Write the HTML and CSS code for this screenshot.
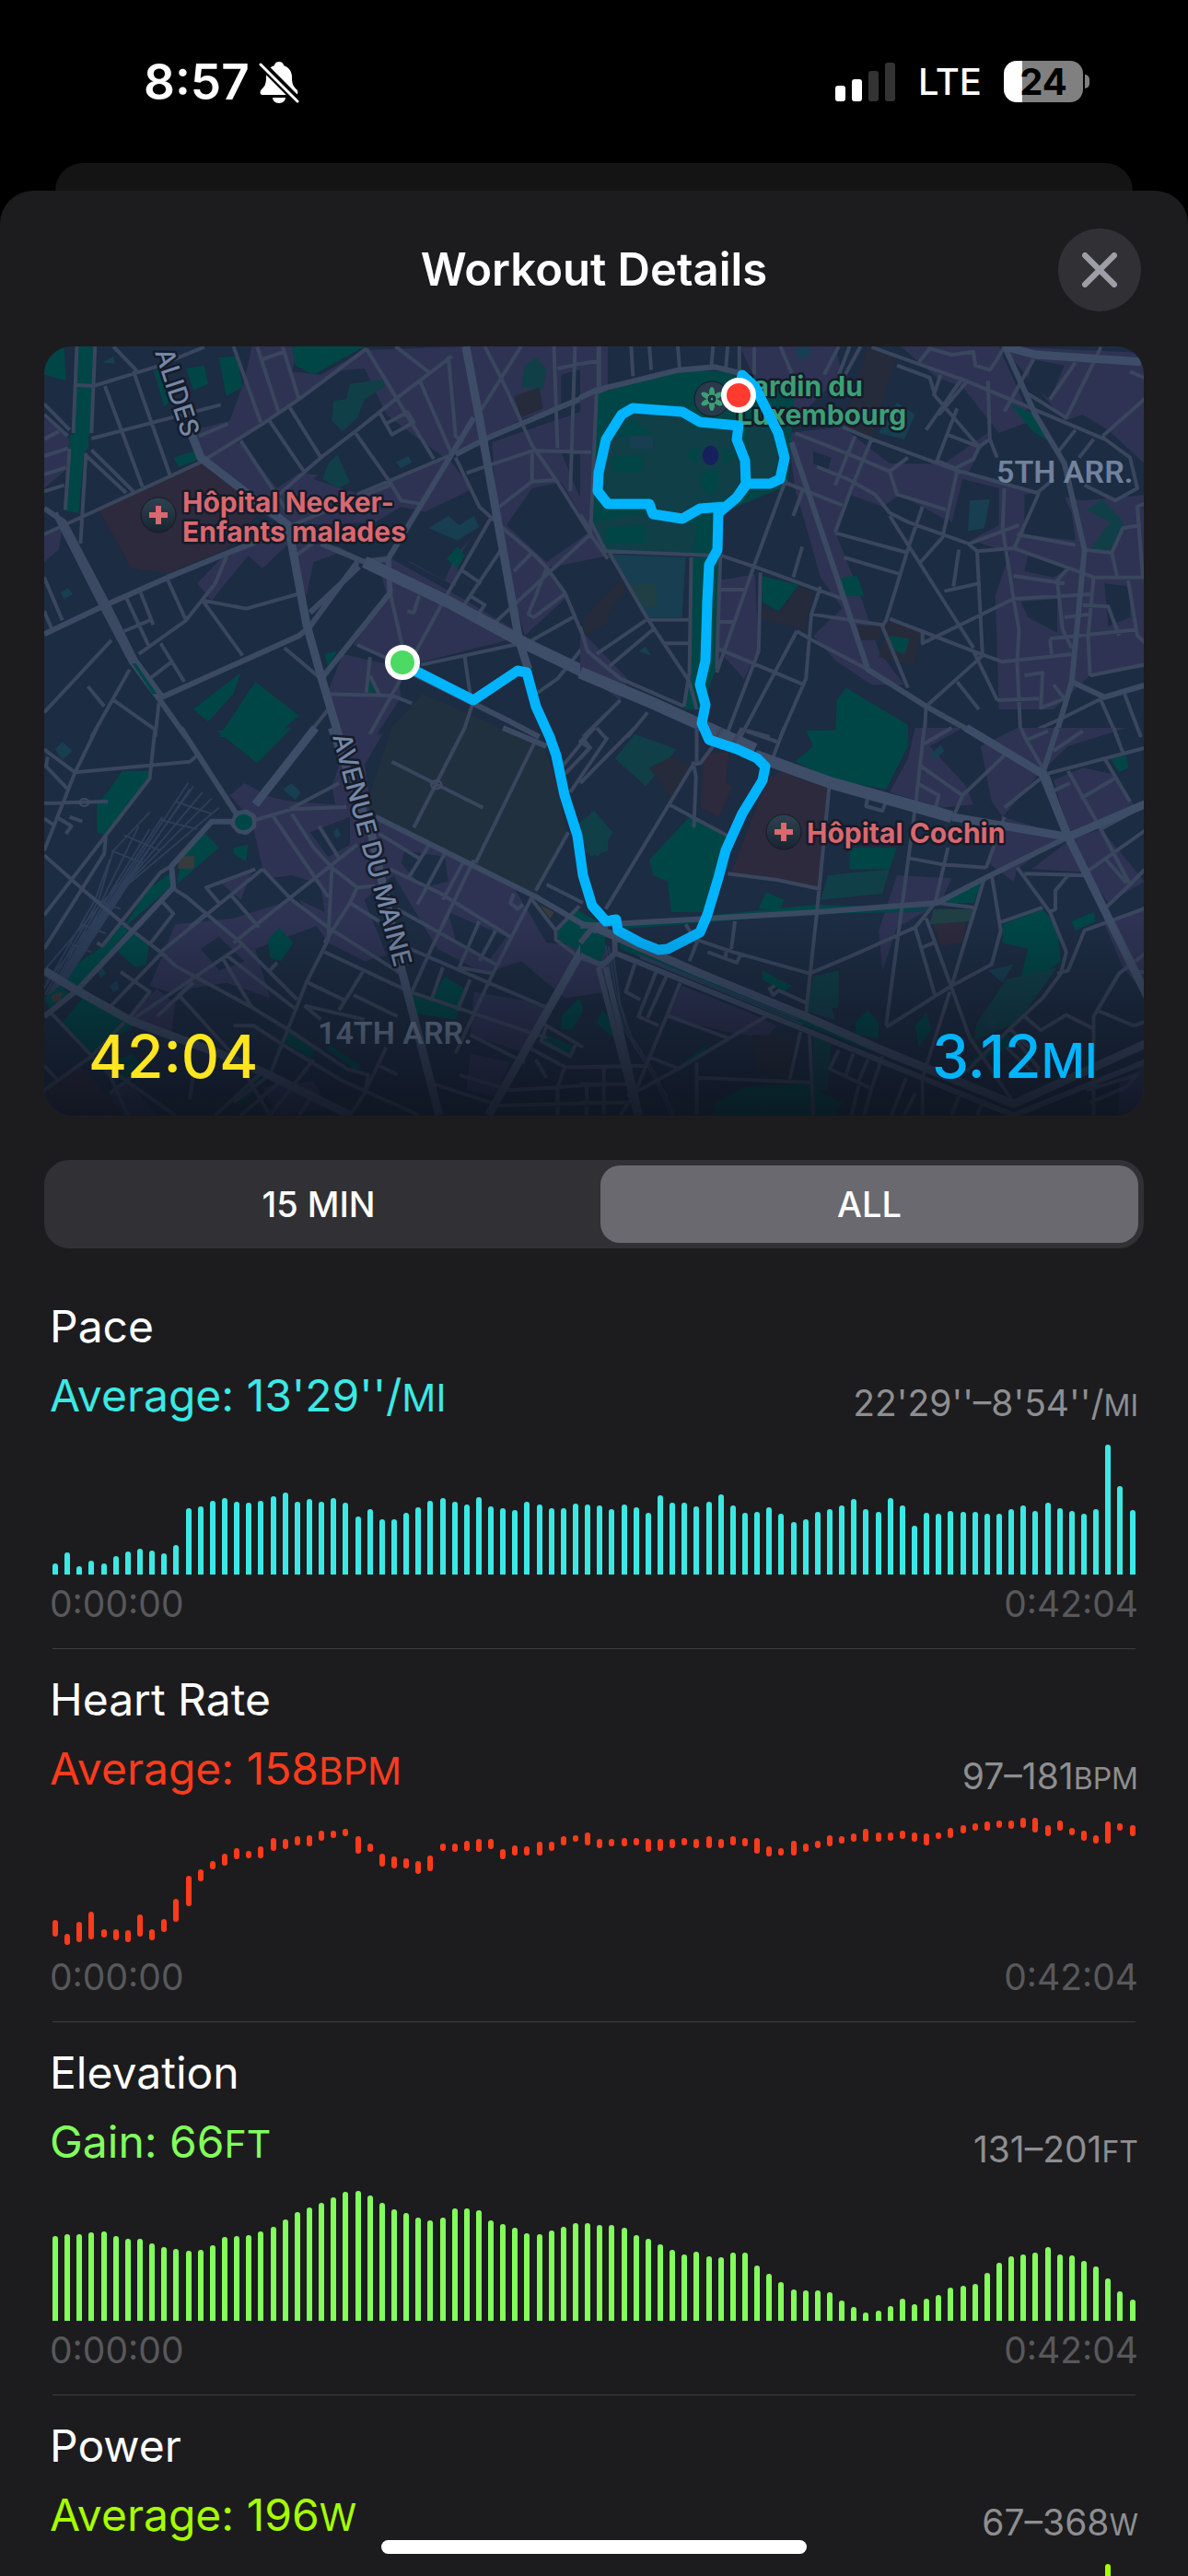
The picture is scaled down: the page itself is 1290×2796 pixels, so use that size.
FILE: index.html
```html
<!DOCTYPE html>
<html lang="en">
<head>
    <meta charset="UTF-8">
    <meta name="viewport" content="width=device-width, initial-scale=1.0">
    <title>Workout Details</title>
    <link rel="stylesheet" href="styles.css">
</head>
<body>
    <!-- Status bar -->
    <header class="status-bar">
        <div class="status-left">
            <span class="clock">8:57</span>
            <svg class="bell" viewBox="0 0 44 46" aria-hidden="true">
                <path fill="#fff" d="M22 1c3 0 5 2 5 4 6 2 9 7 9 13 0 8 2 10 5 13 2 2 2 6-1 6H4c-3 0-3-4-1-6 3-3 5-5 5-13 0-6 3-11 9-13 0-2 2-4 5-4zM15 40h14c0 3-3 6-7 6s-7-3-7-6z"/>
                <path stroke="#000" stroke-width="9" d="M0 1l43 43"/>
                <path stroke="#fff" stroke-width="3" stroke-linecap="round" d="M2 4l40 40"/>
            </svg>
        </div>
        <div class="status-right">
            <svg class="signal" viewBox="0 0 66 42" aria-hidden="true">
                <rect x="0" y="25" width="11" height="17" rx="3" fill="#fff"/>
                <rect x="18" y="18" width="11" height="24" rx="3" fill="#fff"/>
                <rect x="36" y="9" width="11" height="33" rx="3" fill="#333"/>
                <rect x="54" y="0" width="11" height="42" rx="3" fill="#333"/>
            </svg>
            <span class="network">LTE</span>
            <span class="battery"><span class="battery-level">24</span></span>
        </div>
    </header>

    <div class="back-card"></div>

    <main class="sheet">
        <div class="sheet-header">
            <h1 class="sheet-title">Workout Details</h1>
            <button class="close-button" type="button" aria-label="Close">
                <svg viewBox="0 0 36 36" aria-hidden="true"><path d="M3 3l30 30M33 3L3 33"/></svg>
            </button>
        </div>

        <!-- Route map -->
        <section class="map-card">
            <svg class="map" viewBox="48 376 1194 835" role="img" aria-label="Route map">
                <defs>
                    <linearGradient id="shade" x1="0" y1="0" x2="0" y2="1">
                        <stop offset="0" stop-color="#0c111c" stop-opacity="0"/>
                        <stop offset="1" stop-color="#0c111c" stop-opacity=".8"/>
                    </linearGradient>
                    <linearGradient id="pin" x1="0" y1="0" x2="0" y2="1">
                        <stop offset="0" stop-color="#2f4250"/>
                        <stop offset="1" stop-color="#182430"/>
                    </linearGradient>
                </defs>
                <rect class="land" x="48" y="376" width="1194" height="835"/>

                <!-- north west -->
                <g transform="translate(40 370) scale(.3954 .3333)">
                    <path class="block" d="M590 18H720L700 100L780 110L900 30L1180 18H1568V180L1340 250L1230 320L1120 380L1060 330L960 240L900 90L840 95L720 190L590 300L540 340L440 370L430 290L530 260L545 210L570 130ZM440 370L560 330L660 480L720 430L800 440L880 500L970 460L1130 380L1240 560L1160 700L1150 800L1020 720L1080 560L1000 540L930 590L700 600L640 580ZM520 690L680 640L740 830L760 720L830 690L880 710L960 700L1200 860L1340 960L1010 1060L870 990L960 820L940 740L830 670L760 660L700 650L620 740L580 700L480 845L440 790ZM1250 330L1568 200V380L1440 360L1480 480L1568 700L1400 740L1460 830L1340 960L1270 680ZM840 1020L990 1060L1000 1160L930 1290H830L800 1140ZM20 250L90 320L80 420L20 480ZM20 630L70 610L60 680L20 720Z"/>
                    <path class="land" d="M700 230L780 175L860 160L960 240L880 290L780 370ZM880 310L950 270L1060 330L1090 385L970 440ZM760 450L860 350L940 460L860 490ZM1060 560L1200 480L1245 570L1150 700L1120 780L1020 715ZM1440 110L1530 80V180L1440 220ZM1360 480L1440 460L1520 620L1400 720L1290 600ZM1060 1090L1180 1080L1300 1070L1340 1130L1250 1180Z"/>
                    <path class="park" d="M110 18H160L145 300L130 360L115 560L78 555L90 350L100 300ZM20 18H75L80 130L20 110ZM700 18H900L760 110L710 80ZM410 90L460 80L470 140L430 160ZM500 55L550 50L565 150L520 180ZM375 380L430 360L450 385L390 410ZM430 1200L560 1080L540 1150L470 1240ZM500 1290L600 1110L720 1220L650 1290ZM1125 710L1155 670L1175 700L1155 740ZM320 95L340 90L370 190L350 215ZM915 1080L935 1145L905 1140ZM790 1020L825 1010L800 1060Z"/>
                    <path class="garden" d="M860 140L950 125L955 150L900 190L880 250L840 295L810 260L815 195L850 190ZM800 400L825 370L860 460L830 480L785 450ZM1340 80L1370 55L1400 90L1390 160L1330 150Z"/>
                    <path class="school" d="M1075 610L1130 570L1160 600L1200 570L1215 605L1155 650ZM985 395L1020 375L1030 395L1000 415ZM180 70L210 50L215 75ZM65 820L85 805L100 825L75 840Z"/>
                    <path class="hospital" d="M170 550L450 392L485 430L560 490L610 560L520 680L360 755L260 740Z"/>
                    <path class="dim" d="M1310 180L1380 150L1390 220L1330 250ZM1500 920L1568 820V920L1510 960Z"/>
                    <path class="road" d="M110 18L100 300M160 18L150 300M105 143L155 147L325 85L460 20M210 18L275 98M187 147L290 475M265 98L365 435M20 205L90 290M20 240L85 310M150 318L505 208M20 320L60 295M20 375L85 350M20 435L80 412M20 490L75 470M90 350L78 550M135 365L120 660M150 355L265 490M132 370L245 495M20 630L450 395L620 270L720 190L905 25M540 18L615 265M605 20L665 235M675 20L720 190M620 60L680 35M445 310L525 270M905 25L1010 230L1090 385M985 18L1075 100M1130 50L1150 310L1170 330M665 500L780 380L880 290L990 185L1140 50M695 218L780 380M640 262L735 428M560 325L690 560M875 300L970 460L1000 520L1050 530M940 230L975 305L1035 265L1018 232L955 272M1330 18L1220 225M1230 18L1275 120L1360 340L1430 460L1520 630L1568 710M1420 18L1430 350M1478 18L1465 490M1545 18V150M1430 90L1540 62M1050 125L1140 370M880 500L1130 375M700 600L970 470M1180 430L1360 358L1525 362M1360 360V458L1270 540M1360 458L1425 453M1150 380L1215 540L1290 620L1360 690L1400 738L1450 820L1510 990L1568 1050M1250 570L1120 840L1000 1100M1275 680L1170 865M1360 690L1310 750M1520 630L1260 915M1400 740L1350 890L1365 900L1455 820M1165 745L1220 790M1190 830L1230 860L1215 885M1480 895L1345 985M1330 985L1055 1055M970 820L1005 1000M1050 830L1035 885L1018 880M1175 1030L1190 1150M880 990L1010 1060M455 845L575 872L715 825M525 690L490 790L410 910L280 1020M455 845L565 1025M358 775L410 910M710 700L780 640M285 820L320 925M245 835L310 1000M240 945L310 910M20 770L70 910M20 880L40 935M340 985L405 1110M370 1045L310 1100M20 1210L205 975M255 1070L150 1290M140 1125L185 1190M205 1165L330 1270M335 1180L325 1290M680 1000L780 1100M785 1150L975 1155L1030 1180M915 1030L905 1145M915 1090L940 1150M1000 1100L910 1290M800 1200L740 1290M1505 990L1430 1100L1370 1150M1568 1210L1500 1290M1525 180L1520 630"/>
                    <path class="street" d="M780 660L900 720L965 710L1200 250M965 710L970 820L785 1095M20 955L180 865L360 770L525 690L700 610M1150 370L1240 315L1360 255L1568 150M50 560L180 865L260 1045L335 1165L410 1290M20 545L75 590L195 860L270 1040L345 1160M335 1165L720 960L750 930L880 720M750 885L885 735M1010 1070L1300 1240L1380 1290"/>
                    <path class="avenue" d="M1178 18L1215 250L1325 980L1350 1070M420 290L450 380L690 600L740 920L780 1090L830 1290"/>
                    <path class="boulevard" d="M900 720L1130 850L1340 985L1568 1115"/>
                    <path class="park" d="M90 310L105 302H130L142 315V350L130 362H105L90 350ZM262 1050L272 1050L330 1150L318 1150Z"/>
                </g>

                <!-- north east -->
                <g transform="translate(630 370) scale(.3954 .3333)">
                    <path class="block" d="M0 18H50L45 160L0 190ZM440 20L700 18L720 110L560 290L470 100ZM880 18H1150L1240 260L1150 300L1050 150L980 120ZM1160 18L1568 40V420L1450 290L1380 240L1330 260L1230 120ZM570 300L720 280L850 400L1000 400L1130 290L1060 440L1000 580L880 500L830 540L740 500L700 620L770 830L820 1010L890 1120L800 1120L700 1040L640 960L720 870L660 770L590 480ZM1030 430L1260 490L1380 520L1568 500V1060L1400 1090L1300 1200L1150 1200L1140 830L1180 690L1050 640L1000 560ZM380 780L480 760L490 1000L450 1100L380 1010ZM0 940L130 1100L110 1170L0 1080ZM0 190L45 170L30 590L0 560ZM900 0L1000 50V110L930 60Z"/>
                    <path class="land" d="M1220 500L1320 480L1350 560L1360 650L1220 630ZM1050 450L1150 480V600L1070 650L1010 640ZM1210 850L1310 840V950L1230 900ZM1240 60L1330 80L1290 190L1230 140ZM1440 790L1510 800V900L1450 930ZM1230 700L1340 740L1300 770L1220 750ZM640 360L690 380L680 420L640 400Z"/>
                    <path class="park" d="M45 175L270 90L440 105L590 150L570 470L390 560L385 700L70 685L35 610ZM310 705H385L370 1080L330 1200H285L300 1050ZM500 765L600 795L545 880L500 850ZM715 770L760 765L780 830H720ZM730 1130L900 1250V1290H700L705 1170ZM1180 205L1250 240L1290 330L1240 290Z"/>
                    <path class="garden" d="M70 320L130 230H260L320 290L420 290L450 400L430 500L330 530L280 570L200 560V530L75 520L50 440ZM460 260L540 300V450H460ZM35 590L170 560L320 600L310 690L75 680ZM1390 550L1435 515L1495 595L1455 680H1400L1455 590Z"/>
                    <path class="park" d="M290 370L325 340V405ZM395 345L430 370L395 405ZM335 430L380 420V480L357 508L332 480ZM90 310L130 250L200 300L130 310ZM90 380L170 370V430H90ZM70 610L180 600V660H70Z"/>
                    <path class="school" d="M80 695L290 705L280 900H185ZM1070 520L1125 515L1110 610L1065 620ZM820 300L870 200L920 240L890 320ZM135 310H200V350H135ZM590 25L630 20V50L600 60ZM160 1010L180 995L195 1025Z"/>
                    <path class="olive" d="M130 795L210 790V870L175 865Z"/>
                    <path class="dim" d="M500 870L550 885L600 800L640 820L615 940L500 905ZM820 1030L850 905L940 940L915 1055ZM790 20L870 40L800 320L720 280ZM10 900L110 780L125 810L50 930L10 960ZM760 925L830 930L820 975L770 975Z"/>
                    <path class="park" d="M850 960L905 970L890 1020L850 1000Z"/>
                    <ellipse class="pond" cx="358" cy="373" rx="22" ry="32"/>
                    <path class="road" d="M0 75L50 65M50 18V160M140 18L145 115M190 18L195 95M268 18L273 90M365 18L360 85M405 18L400 90M437 18V105M478 20V110M550 18L600 160M710 18L670 110M740 18L710 110M770 18L700 170M800 20L870 50L1060 130L1200 200L1440 320M870 80L960 120L975 180L1095 345M990 110L970 180M1050 120L950 290M1060 135L985 240M930 70L960 25L1020 45L1080 35L1085 80L1125 95L1145 60L1165 18M1245 60L1165 230M1220 165L1335 250L1410 70M1360 70L1290 190M1430 20L1410 70M1568 170L1435 310M1510 100L1568 130M0 362H30M45 165L30 590L70 685L390 700L490 740L720 840M0 565L30 620M80 690L185 905L300 1110L320 1200M305 705L300 1080L285 1190M385 700L375 1070M380 810H450M375 915H425M180 908H300M230 985H300M590 300L740 370L850 425L900 380M720 280L800 320L1030 420L1255 495L1300 450M850 425L870 500L1005 550M735 450L810 500L850 560L900 590L1065 660L1090 685L1190 675L1365 750L1410 770H1568M755 310L700 470M800 320L745 480L700 625M650 410L735 450M565 450L475 740L375 1080M610 490L585 570M560 460L720 535M1095 345L1125 320L1120 130M1125 320L1145 380M1095 345L1080 385L1030 415L980 390L1035 220M1008 305L1095 345M1035 425L995 640L935 720M940 540L905 660L840 910L830 930L900 1130M850 570L1080 1000M700 625L900 690M725 705L880 760M610 670L585 770M495 755L490 1010L400 1290M660 800L635 890L620 1100L550 1290M635 890L830 925M595 945L630 970L790 1070M595 945L440 1290M375 1000L615 1120M850 905L1100 1020L1160 1045L1350 1020M940 950V985L1190 840L1400 825M1000 815L1095 790M1040 680L1025 800M1090 685L1105 1025L950 1190M1165 480L1160 610L1190 840L1205 940L1200 1050L1210 1290M1070 660L1205 600M1260 495L1190 680M1200 630L1360 665M1340 740L1310 780L1325 940L1350 1000M1190 765L1330 790M1385 680L1460 690L1490 610L1540 600M1410 770L1395 960L1400 1090M1460 690L1475 770M1505 780L1530 960L1568 1000M1385 470L1470 520L1530 480L1510 380L1430 310M1310 365L1360 290M1370 380L1410 320M1568 520L1530 540L1545 770M1290 970L1530 940M1290 970L1295 1020M1330 900L1400 890M1380 860L1450 865L1480 960M1220 1090L1270 1080L1265 1195L1330 1165L1300 1120M1035 1110L1095 1200M1145 1170L1260 1165M1145 1170L1080 1010M1430 1170L1475 1290M1495 1150L1540 1290M1440 1160L1330 1225L1210 1290M950 1190L945 1290M10 1290L110 1170M185 1210L130 1290M45 1020L180 910M80 1060L200 940M0 930L20 1010L110 1100L285 1190M1400 1090L1568 1050M460 1270L520 1290"/>
                    <path class="street" d="M0 185L45 160L270 95L370 85L440 105L480 135M1165 18L1250 240L1330 400L1385 680L1350 1110L1305 1290M1350 1110L1440 1160L1568 1115M580 330L620 470L790 1070L950 1190L1100 1290"/>
                    <path class="avenue" d="M1165 18L1250 45L1540 68"/>
                    <path class="boulevard" d="M0 1080L200 1180L480 1330"/>
                </g>

                <!-- south west -->
                <g transform="translate(40 790) scale(.3954 .3333)">
                    <path class="block" d="M530 220L570 180L640 225L700 240L820 250L810 190L860 20H950L900 120L920 280L940 300L1300 500L1400 700L1568 720V860L1450 880L1330 760L1230 800L1100 720L980 480L900 560L960 740L900 760L800 700L720 560L620 460L590 300ZM380 640L540 620L700 560L780 640L600 720L640 880L520 830L360 860L310 840ZM250 940L330 850L380 900L370 990L280 960ZM1200 860L1400 900L1340 1060L1190 1000ZM1190 1060L1300 1090L1260 1200L1180 1180ZM620 1170L760 1150L800 1240L660 1262ZM200 1190L250 1150L330 1262H220ZM500 500L590 470L560 560Z"/>
                    <path class="land" d="M640 490L700 480L780 510L790 600L720 560ZM1010 400L1120 420L1130 500L1060 520L1000 440ZM1130 600L1290 680L1240 760L1150 690ZM450 720L500 680L570 760L500 790ZM750 340L860 290L860 380L800 420Z"/>
                    <path class="park" d="M235 140H310V160L190 350L165 340V250L200 200ZM385 510L400 400L460 340L500 390ZM240 650L300 530L370 470L375 510ZM60 810L170 720L230 640L250 660L110 850ZM215 720L250 660L310 700L300 770L270 780ZM70 960L140 860L280 960L150 1060ZM20 880L70 840L90 870L40 920ZM495 10L700 0L605 115ZM540 390L580 380L575 435L540 410ZM635 690L665 650L705 700L670 760L640 750ZM1085 880L1120 810L1175 850L1150 930ZM1030 870L1160 920L1150 950L1040 930ZM690 980L770 1040L750 1080L680 1020ZM800 1030L890 1100L880 1120L800 1050ZM1430 650L1480 590L1568 650L1550 765L1430 690ZM1400 1000L1480 1040L1465 1070L1395 1020ZM1440 940L1490 880L1500 920L1470 985L1440 980ZM540 1220L620 1120L600 1180L560 1230ZM220 1080L260 1060L300 1110L240 1160Z"/>
                    <path class="garden" d="M1470 330L1530 270L1568 320V400L1520 420Z"/>
                    <path class="school" d="M50 70L70 45L98 75L70 105ZM675 200L700 180L725 210L710 235ZM815 340L825 325L835 350L822 360ZM165 790L180 780L190 800L175 815ZM200 840L220 825L225 850L210 862Z"/>
                    <path class="hospital" d="M20 1180L120 1100L240 1262H20Z"/>
                    <path class="clay" d="M388 418H432V458H388ZM40 870L70 858L65 890L42 895ZM1380 575L1420 600L1410 622Z"/>
                    <path class="rail" d="M22 870L170 560L210 400L310 275M30 870L180 560L280 320M38 865L195 550L310 330M20 850L160 560L200 430M45 860L205 545L345 290M52 850L215 540L415 180M58 845L225 530L430 190M64 840L235 520L455 210M70 835L245 510L480 230M76 830L250 510L500 260M20 790L230 500M26 830L260 480L420 200M205 400L290 440M240 350L340 400M160 560L230 590M340 300L440 330M380 240L480 280M120 640L190 670M90 700L150 730"/>
                </g>
                <path class="cemetery" d="M459 753L566 800L590 810L605 850L615 903L582 973L405 886L398 873L425 790Z"/>
                <g transform="translate(40 790) scale(.3954 .3333)">
                    <path class="road" d="M975 110L1225 260M1175 0L1035 325M1370 40L1205 440M1200 -90L1175 0M165 0L105 145L20 400M20 70L105 145L420 110L440 90M30 95L25 125L85 200M325 0L310 165L20 610M190 350L185 410L20 720M20 245L195 240M20 295L50 320M60 295L95 320L80 345M90 290L125 305M20 415L130 530L250 650L340 730L380 775L590 910M370 520L410 550L560 700L715 885M340 560L375 605L310 705M230 795L310 860L250 950M345 730L200 910M420 650L465 605M430 830L330 940M500 570L465 520L600 460M620 460L340 730M530 540L610 650M620 460L700 560L800 650L1000 800M540 700L880 380M560 710L250 960M600 300L700 265L850 258M695 265L830 180M650 290L800 550M700 280L760 390L810 455L880 520L930 515M775 320L830 425M810 460L800 690L740 830L640 1130M880 520L860 570L790 700M640 790L660 765M520 740L715 920M510 750L590 910L700 990L850 1110L910 1130L900 1190M745 830L850 890M790 730L1025 860L1400 1010M895 795L830 920M870 870L990 940M735 905L900 950M735 905L780 950M860 570L940 630M940 345L1050 425M970 460L1110 540L1300 680M1075 385L1020 490M1120 410L1045 575M1170 440L1115 560M1200 430L1075 740L1030 860M1215 630L1160 780L1250 800M1260 660L1215 760M1360 550L1240 830L1150 1060M990 590L1260 770M1025 720L1240 830L1400 910M1190 820L1155 920M1115 780L1085 880M1310 540L1300 570L1320 590L1335 575M1400 510L1500 570M1460 340L1370 530M1360 560L1425 660L1490 580M1425 660V690L1480 740M1530 0L1440 130M1500 35L1520 65L1450 150M1568 30L1465 210M430 830L390 870L550 1080L640 1262M540 970H595L700 1050L840 1150L1050 1262M20 1180L150 1070L240 960M150 1070L380 1262M40 930L200 1130L250 1262M200 1190L270 1130M20 1100L60 1150M430 1130L420 1210M540 1220L640 1130M490 1262L620 1120M560 1262L680 1140M640 1262L760 1080M750 1210L720 1262M960 1040L900 1190L860 1262M940 1100L990 1130M1160 1130L1300 1180L1568 1160M1090 1160L1270 1230L1568 1220M1350 1040L1450 1105H1568M1450 1105L1430 1170V1262M1385 960L1500 1040M1400 970L1385 1020L1465 1070L1480 1030M1370 1080L1400 1140M1190 1000L1340 1090M1510 1160V1262M165 700L180 710L340 470L370 450"/>
                    <path class="street" d="M395 0L545 275M545 305H480L370 450L375 520L110 855L20 940M930 290L1370 550L1500 640L1568 650M1480 740L1550 770L1568 760M1280 0L1400 60M575 275L595 290V320L575 340L555 335L540 315L548 280Z"/>
                    <path class="avenue" d="M765 0L600 250M20 790L110 855L260 955L500 1060L620 1120L860 1262M1530 650L1480 760L1240 1262M810 0L920 350L1000 780L1105 1262"/>
                    <circle class="street" cx="1097" cy="185" r="14"/>
                    <circle class="street" cx="130" cy="243" r="12"/>
                    <ellipse class="park" cx="568" cy="307" rx="24" ry="26"/>
                </g>

                <!-- south east -->
                <g transform="translate(630 790) scale(.3954 .3333)">
                    <path class="block" d="M920 0H1050L960 60L1060 190L1080 250L990 260L850 210L900 100ZM1100 60L1200 0H1500L1340 60L1260 150L1160 290L1130 240ZM1300 170L1380 130L1460 150L1520 250L1340 340ZM1120 440L1160 290L1330 350L1200 460L1190 500ZM1350 360L1430 330L1550 500L1450 570L1390 470L1240 460ZM870 480L1020 490L990 570L870 650L830 790L820 660ZM1440 640L1568 570V940L1540 850L1490 780ZM240 940L280 840L450 920L540 970L510 1010L400 990ZM0 780L50 790L40 850L0 810ZM1480 1160L1568 1080V1220L1480 1262Z"/>
                    <path class="park" d="M620 10L900 0V60L840 200L700 170L590 110L640 60ZM190 430L300 290L410 360L340 600H250L240 500L200 480ZM740 390H870L850 460H740ZM490 590L510 535L560 560L550 590ZM120 640L650 575L960 590L930 600L650 605L120 655ZM110 690L640 940L820 1050L1190 1210L1180 1225L620 970L110 720ZM1160 640L1270 590L1310 650L1320 760L1200 860L1230 720L1160 700ZM500 790L580 840L560 860L500 820ZM755 960L790 920L820 960V1010L760 1000ZM920 970L950 930L965 980L930 1040ZM370 1220L450 1170L620 1160L720 1220L700 1262H365ZM1350 630L1410 600L1415 630L1360 660ZM1455 100L1500 90L1505 130L1480 145ZM0 650L35 665L75 710L50 765L0 740ZM270 1100L350 1030L330 1080ZM45 960L60 920L90 950V1010ZM1030 1120L1170 1000L1200 1030L1060 1100ZM980 570L1110 490L1080 570ZM1190 1225L1568 1040V1020L1200 1200Z"/>
                    <path class="garden" d="M680 480L850 460L830 540L660 560ZM640 810L710 790V910L620 930ZM95 100L150 20L265 70L180 190ZM30 270L90 340L50 420L10 400ZM1170 820L1310 780L1200 960L1080 1020L1090 960ZM640 1000L690 1020L680 1180H640Z"/>
                    <path class="school" d="M1120 790L1190 770L1160 830ZM1110 970L1130 940L1145 960L1130 985ZM960 90L990 55L1000 75L975 105ZM640 920L690 910L700 950L640 930Z"/>
                    <path class="hospital" d="M520 160L560 140L680 195L655 525L415 470L470 300ZM340 80H410L400 180L420 190L380 290L330 260ZM970 640L1060 620L1050 700L990 710Z"/>
                    <path class="dim" d="M190 130L250 95L310 130L250 230ZM475 1000L590 1010L570 1140L480 1110Z"/>
                    <path class="olive" d="M970 590H1080L1070 630L960 640Z"/>
                    <path class="rail" d="M70 710L90 860L120 980L200 1130L250 1262M78 712L98 860L128 980L208 1130L258 1262M90 735L110 900L150 1040L240 1200M160 740L600 950M165 748L610 965"/>
                    <path class="road" d="M150 0L0 180M40 0L0 45L25 65L0 100M45 0L75 40M365 60L330 115L310 120L70 590M310 110L318 160L312 325M320 0V110M245 250L410 355M405 475L540 495L660 525M685 180L650 600L620 930M455 10L540 45M390 0L370 40M560 0L530 95M445 0L420 50M790 220L785 255L830 270L840 240M925 180L985 220L975 265M945 0L920 260L840 970M930 120L1050 220L1165 90M940 55L1020 0M1050 220L1025 290M1010 390L975 570M905 425L995 445L1115 455M1130 480L1155 660L1130 770L1020 840L840 975M1110 490L1020 840M1200 455L1290 600L1335 730L1320 800L1270 880L1180 980L1060 1120M1150 635L1270 585M1290 600L1305 590V530L1340 480M1220 475L1390 480M1310 800L1340 790L1385 660L1568 580M980 570L1080 585M975 570L920 650L740 745L630 800L420 730L320 690M920 650L975 875M950 620L1015 830L1070 1010L1190 1220M940 715L970 700M1015 860L940 1140M1165 260L1280 150M1115 455L1165 290M1210 0L1225 40L1280 150M1225 40L1285 10M1300 75L1380 10M1280 150L1568 60M1340 140L1430 330L1510 510L1568 440M1430 330L1568 240M1465 0L1490 80M1440 100L1510 240M1375 230L1475 160M1300 205L1345 180M1510 510L1440 590M1445 430L1500 505M1568 320L1390 470M1568 720L1480 800L1410 940V1262M1515 795H1568M1420 920L1520 970L1568 950M1410 980L1335 935L1265 985L1220 940M1180 980L1250 1060M150 770L125 860L165 885M210 790L160 940L215 970M240 800L185 945M275 830L150 1190M235 935L405 1010M510 940L270 1110L130 1200M185 1070L270 1110M290 640L320 700L300 760M425 630L415 720M350 730L430 765L440 740M400 720V750M620 895L545 855L530 870L520 850L535 840M605 990L575 1145M630 1000L640 1262M320 1090V1262M325 1140L635 1155M0 1105L180 1100M0 1160H130M0 1220H130M65 1105V1262M110 1262L150 1190M710 1050L685 1110L800 1175L830 1070M750 1060L730 1130M790 1080L765 1150M765 1165L745 1262M800 1175L780 1262M940 1140V1262M895 1140L855 1262M920 1190L890 1262M1040 1200L1020 1262M1110 1210L1090 1262M1390 1180L1530 1130L1500 1170L1400 1220M1200 1020L1260 1110L1250 1130L1170 1040"/>
                    <path class="street" d="M1340 355L1110 490L980 570L650 600L0 645M1310 0L1270 150M100 735L620 985L1190 1262L1568 1080M0 740L60 775L95 735V690M50 780L155 1262M70 780L165 1262M1280 150L1340 355M0 700L35 650"/>
                    <path class="avenue" d="M1060 0L1270 150L1340 355L1568 900M1340 355L1568 240M40 650L330 800L620 940L830 1050L1190 1225L1568 1020"/>
                    <path class="boulevard" d="M480 90L690 180L1020 290"/>
                    <path class="avenue" d="M1020 290L1340 355"/>
                </g>

                <!-- labels and pins -->
                <g class="street-name">
                    <text transform="translate(168 382) rotate(72)">ALIDES</text>
                    <text transform="translate(361 799) rotate(75)">AVENUE DU MAINE</text>
                </g>
                <g class="district">
                    <text x="1082" y="524">5TH ARR.</text>
                    <text x="345" y="1133">14TH ARR.</text>
                </g>
                <g class="place">
                    <circle cx="172" cy="559" r="19" fill="url(#pin)"/>
                    <path d="M162 559h20M172 549v20"/>
                    <text x="198" y="556">Hôpital Necker-</text>
                    <text x="198" y="588">Enfants malades</text>
                    <circle cx="851" cy="903" r="19" fill="url(#pin)"/>
                    <path d="M841 903h20M851 893v20"/>
                    <text x="876" y="915">Hôpital Cochin</text>
                </g>
                <g class="place place-park">
                    <circle cx="773" cy="433" r="19" fill="#2a3a4c"/>
                    <g class="petals">
                        <ellipse cx="773" cy="426" rx="3" ry="6"/>
                        <ellipse cx="773" cy="426" rx="3" ry="6" transform="rotate(60 773 433)"/>
                        <ellipse cx="773" cy="426" rx="3" ry="6" transform="rotate(120 773 433)"/>
                        <ellipse cx="773" cy="426" rx="3" ry="6" transform="rotate(180 773 433)"/>
                        <ellipse cx="773" cy="426" rx="3" ry="6" transform="rotate(240 773 433)"/>
                        <ellipse cx="773" cy="426" rx="3" ry="6" transform="rotate(300 773 433)"/>
                    </g>
                    <circle cx="773" cy="433" r="4" fill="#2a3a4c"/>
                    <circle cx="773" cy="433" r="2" fill="#3c9e76"/>
                    <text x="800" y="430">Jardin du</text>
                    <text x="800" y="461">Luxembourg</text>
                </g>

                <path class="route" d="M437 719L451 728L514 760L562 728L572 730L582 767L597 800L604 820L613 863L627 907L633 950L643 983L658 1000L669 998L671 1010L695 1023L715 1031L725 1030L760 1012L768 993L780 953L788 923L806 883L828 847L831 832L822 823L800 813L770 803L762 785L766 765L760 743L766 717L768 653L770 613L779 597L780 557L800 540L810 527L809 500L800 477L802 462L760 458L741 447L687 443L675 450L658 477L650 513L649 533L660 547L705 547L709 558L741 563L760 552L788 550L800 540L810 525L836 525L847 520L852 497L845 470L820 420L806 407L802 429"/>
                <circle class="marker" cx="437" cy="719" r="16" fill="#4cd964"/>
                <circle class="marker" cx="802" cy="429" r="16" fill="#ff3b30"/>
                <rect x="48" y="1000" width="1194" height="211" fill="url(#shade)"/>
            </svg>
            <div class="map-stats">
                <span class="duration">42:04</span>
                <span class="distance">3.12<span class="unit">MI</span></span>
            </div>
        </section>

        <div class="segmented" role="group" aria-label="Time range">
            <button class="segment" type="button" aria-pressed="false">15 MIN</button>
            <button class="segment selected" type="button" aria-pressed="true">ALL</button>
        </div>

        <section class="metric pace">
            <h2 class="metric-name">Pace</h2>
            <div class="metric-row">
                <span class="metric-value">Average: 13'29''/<span class="unit">MI</span></span>
                <span class="metric-range">22'29''–8'54''/<span class="unit">MI</span></span>
            </div>
            <div class="chart" id="paceChart"></div>
            <div class="times"><span>0:00:00</span><span>0:42:04</span></div>
        </section>

        <section class="metric heart">
            <h2 class="metric-name">Heart Rate</h2>
            <div class="metric-row">
                <span class="metric-value">Average: 158<span class="unit">BPM</span></span>
                <span class="metric-range">97–181<span class="unit">BPM</span></span>
            </div>
            <div class="chart" id="heartChart"></div>
            <div class="times"><span>0:00:00</span><span>0:42:04</span></div>
        </section>

        <section class="metric elevation">
            <h2 class="metric-name">Elevation</h2>
            <div class="metric-row">
                <span class="metric-value">Gain: 66<span class="unit">FT</span></span>
                <span class="metric-range">131–201<span class="unit">FT</span></span>
            </div>
            <div class="chart" id="elevationChart"></div>
            <div class="times"><span>0:00:00</span><span>0:42:04</span></div>
        </section>

        <section class="metric power">
            <h2 class="metric-name">Power</h2>
            <div class="metric-row">
                <span class="metric-value">Average: 196<span class="unit">W</span></span>
                <span class="metric-range">67–368<span class="unit">W</span></span>
            </div>
            <div class="chart" id="powerChart"></div>
        </section>
    </main>

    <div class="home-indicator"></div>

    <script src="script.js"></script>
</body>
</html>
```

FILE: styles.css
```css
* {
    margin: 0;
    padding: 0;
    box-sizing: border-box;
}

body {
    font-family: Inter, 'Liberation Sans', sans-serif;
    background: #000;
    color: #fff;
    height: 100vh;
    overflow: hidden;
    display: flex;
    flex-direction: column;
}

button {
    font-family: inherit;
    color: inherit;
    border: none;
}

/* Status bar */
.status-bar {
    flex: none;
    height: 177px;
    padding: 0 107px 0 156px;
    display: flex;
    align-items: center;
    justify-content: space-between;
}

.status-left,
.status-right {
    display: flex;
    align-items: center;
}

.status-left {
    gap: 10px;
}

.status-right {
    gap: 24px;
}

.clock {
    font-size: 53px;
    font-weight: 600;
}

.bell {
    width: 44px;
    height: 46px;
}

.signal {
    width: 66px;
    height: 42px;
}

.network {
    font-size: 40px;
    font-weight: 500;
}

.battery {
    position: relative;
    width: 86px;
    height: 45px;
    border-radius: 14px;
    background: linear-gradient(90deg, #fff 20px, #808080 20px);
    margin-right: 7px;
    display: flex;
    align-items: center;
    justify-content: center;
}

.battery::after {
    content: '';
    position: absolute;
    left: 88px;
    top: 15px;
    width: 5px;
    height: 15px;
    border-radius: 0 5px 5px 0;
    background: #808080;
}

.battery-level {
    color: #000;
    font-size: 40px;
    font-weight: 700;
}

/* Sheet */
.back-card {
    flex: none;
    height: 30px;
    margin: 0 60px;
    border-radius: 30px 30px 0 0;
    background: #141414;
}

.sheet {
    flex: 1;
    min-height: 0;
    overflow: hidden;
    border-radius: 36px 36px 0 0;
    background: #1c1c1e;
}

.sheet-header {
    display: grid;
    grid-template-columns: 90px 1fr 90px;
    align-items: center;
    padding: 41px 51px 38px;
}

.sheet-title {
    grid-column: 2;
    font-size: 49px;
    font-weight: 600;
    line-height: 60px;
    text-align: center;
}

.close-button {
    width: 90px;
    height: 90px;
    border-radius: 50%;
    background: #313135;
    display: flex;
    align-items: center;
    justify-content: center;
}

.close-button svg {
    width: 38px;
    height: 38px;
    stroke: #9e9ea6;
    stroke-width: 6;
    stroke-linecap: round;
}

/* Map */
.map-card {
    position: relative;
    margin: 0 48px;
    border-radius: 30px;
    overflow: hidden;
}

.map {
    display: block;
    width: 100%;
    height: auto;
}

.map path {
    vector-effect: non-scaling-stroke;
}

.land { fill: #1c2c42; }
.block { fill: #2e3354; }
.park { fill: #004647; }
.garden { fill: #103f48; }
.school { fill: #173e51; }
.olive { fill: #1f3f45; }
.hospital { fill: #2c2a3c; }
.dim { fill: #262b3b; }
.clay { fill: #383b3c; }
.pond { fill: #15205c; }
.cemetery { fill: #21303f; }

.road,
.street,
.avenue,
.boulevard,
.rail,
.route {
    fill: none;
    stroke-linejoin: round;
}

.rail {
    stroke: #2c3e59;
    stroke-width: 2;
}

.road {
    stroke: #39465d;
    stroke-width: 4;
}

.street {
    stroke: #3b4a62;
    stroke-width: 6;
}

.avenue {
    stroke: #3e4d67;
    stroke-width: 9;
}

.boulevard {
    stroke: #3f4e68;
    stroke-width: 13;
}

.route {
    stroke: #00b4ff;
    stroke-width: 11;
    stroke-linecap: round;
}

.marker {
    stroke: #fff;
    stroke-width: 6;
}

.map text {
    paint-order: stroke;
    stroke: #161b29;
    stroke-width: 5;
    stroke-linejoin: round;
}

.street-name {
    font-size: 28px;
    font-weight: 500;
    fill: #7588a8;
}

.district {
    font-family: Roboto, sans-serif;
    font-size: 34px;
    font-weight: 600;
    fill: #71829d;
}

.map .district text {
    stroke: none;
}

.place {
    font-size: 30px;
    font-weight: 700;
    fill: #d9686f;
}

.place path {
    stroke: #d9686f;
    stroke-width: 6;
}

.place circle {
    stroke: #141c26;
}

.place-park {
    fill: #3c9e76;
}

.map-stats {
    position: absolute;
    left: 48px;
    right: 50px;
    bottom: 24px;
    display: flex;
    justify-content: space-between;
    font-size: 64px;
    font-weight: 500;
    line-height: 80px;
}

.map-stats .unit {
    font-size: 52px;
}

.duration {
    color: #ffe620;
}

.distance {
    color: #00b4ff;
}

.unit {
    line-height: 1;
}

/* Segmented control */
.segmented {
    display: flex;
    gap: 14px;
    margin: 48px 48px 30px;
    padding: 6px;
    border-radius: 27px;
    background: #313135;
}

.segment {
    flex: 1;
    height: 84px;
    border-radius: 21px;
    background: none;
    font-size: 38px;
    font-weight: 500;
}

.segment.selected {
    background: #6a696f;
}

/* Metrics */
.metric {
    margin: 0 57px;
    padding: 25px 0 24px;
    border-bottom: 1px solid #3d3d40;
}

.metric-name {
    margin: 0 -3px;
    font-size: 48px;
    font-weight: 400;
    line-height: 60px;
}

.metric-row {
    display: flex;
    justify-content: space-between;
    align-items: flex-end;
    margin: 15px -3px 0;
}

.metric-value {
    font-size: 48px;
    line-height: 60px;
}

.metric-value .unit {
    font-size: 41px;
}

.metric-range {
    font-size: 39px;
    line-height: 44px;
    color: #8e8e90;
}

.metric-range .unit {
    font-size: 32px;
}

.chart {
    display: flex;
    justify-content: space-between;
    align-items: flex-end;
    height: 141px;
    margin-top: 23px;
}

.bar {
    width: 6px;
    border-radius: 3px 3px 0 0;
    background: currentColor;
}

.heart .bar {
    border-radius: 3px;
}

.times {
    display: flex;
    justify-content: space-between;
    margin: 8px -3px 0;
    font-size: 39px;
    line-height: 48px;
    color: #58585b;
}

.pace .metric-value,
.pace .chart {
    color: #3be9e4;
}

.heart .metric-value,
.heart .chart {
    color: #ff3b1c;
}

.elevation .metric-value,
.elevation .chart {
    color: #83ff5c;
}

.power .metric-value,
.power .chart {
    color: #a6ff00;
}

.home-indicator {
    position: fixed;
    left: 50%;
    bottom: 24px;
    width: 462px;
    height: 15px;
    transform: translateX(-50%);
    border-radius: 8px;
    background: #fff;
}
```

FILE: script.js
```js
const pace = [
    12, 24, 9, 15, 12, 20, 25, 28, 26, 23, 32, 72, 74, 80, 83, 79, 78, 80, 85, 89,
    79, 82, 79, 83, 78, 63, 71, 60, 60, 67, 73, 80, 83, 79, 76, 84, 74, 72, 70, 79,
    76, 72, 72, 77, 76, 75, 71, 76, 73, 67, 86, 78, 78, 74, 79, 87, 75, 67, 68, 73,
    66, 57, 60, 68, 71, 75, 82, 71, 68, 83, 75, 53, 67, 66, 69, 68, 68, 66, 66, 71,
    75, 69, 78, 72, 69, 66, 71, 141, 96, 70
];

// [low, high] of each interval
const heart = [
    [12, 30], [3, 15], [6, 28], [9, 39], [11, 20], [8, 20], [6, 19], [12, 36], [8, 20], [17, 31],
    [28, 53], [45, 78], [72, 85], [85, 94], [89, 102], [96, 108], [97, 105], [97, 110], [105, 119], [107, 118],
    [111, 121], [110, 122], [116, 127], [119, 127], [121, 129], [102, 121], [104, 113], [88, 102], [86, 99], [86, 97],
    [80, 94], [83, 100], [105, 113], [104, 113], [105, 116], [104, 118], [107, 118], [96, 107], [100, 111], [100, 110],
    [100, 115], [105, 115], [111, 121], [115, 122], [111, 125], [108, 118], [110, 118], [110, 119], [111, 119], [104, 118],
    [105, 118], [108, 118], [111, 119], [108, 118], [108, 121], [108, 118], [111, 121], [110, 119], [102, 119], [99, 110],
    [100, 108], [100, 116], [104, 113], [108, 116], [110, 122], [113, 121], [115, 124], [115, 129], [115, 125], [116, 125],
    [118, 127], [115, 125], [111, 124], [118, 125], [119, 130], [124, 133], [127, 135], [127, 137], [130, 138], [129, 138],
    [130, 141], [125, 141], [121, 133], [127, 138], [122, 130], [116, 127], [113, 122], [113, 137], [127, 135], [121, 133]
];

const elevation = [
    92, 94, 94, 96, 97, 92, 89, 89, 84, 80, 78, 76, 77, 82, 91, 92, 93, 97, 102, 110,
    118, 123, 128, 134, 140, 141, 136, 128, 121, 117, 112, 109, 112, 122, 122, 120, 109, 105, 101, 95,
    94, 98, 102, 106, 106, 104, 104, 101, 93, 89, 83, 77, 72, 75, 70, 69, 74, 74, 60, 51,
    42, 34, 33, 33, 31, 22, 15, 9, 11, 16, 24, 18, 24, 28, 36, 38, 40, 52, 63, 70,
    72, 74, 80, 72, 71, 65, 59, 46, 32, 23
];

const power = pace.map(value => value > 100 ? 141 : value);

function drawChart(id, data) {
    const chart = document.getElementById(id);
    data.forEach(function(item) {
        const [low, high] = Array.isArray(item) ? item : [0, item];
        const bar = document.createElement('div');
        bar.className = 'bar';
        bar.style.height = (high - low) + 'px';
        bar.style.marginBottom = low + 'px';
        chart.appendChild(bar);
    });
}

drawChart('paceChart', pace);
drawChart('heartChart', heart);
drawChart('elevationChart', elevation);
drawChart('powerChart', power);
```
